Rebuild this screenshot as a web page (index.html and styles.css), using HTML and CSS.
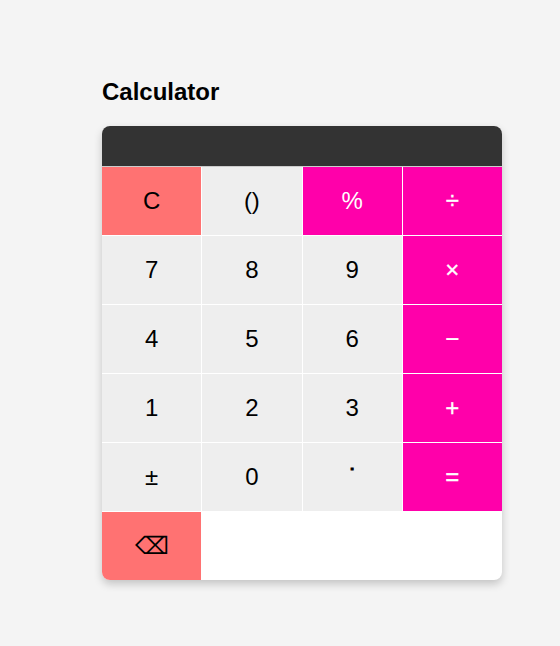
FILE: index.html
```html
<!DOCTYPE html>
<html lang="en">
<head>
<meta charset="utf-8">
<title>Calculator</title>
<link rel="stylesheet" href="styles.css">
</head>
<body>
<main class="container">
<h2>Calculator</h2>
<div class="calculator">
<div class="display"></div>
<div class="buttons">
<button class="clear">C</button><button>()</button><button class="operator percent">%</button><button class="operator">÷</button>
<button>7</button><button>8</button><button>9</button><button class="operator">×</button>
<button>4</button><button>5</button><button>6</button><button class="operator">−</button>
<button>1</button><button>2</button><button>3</button><button class="operator">+</button>
<button>±</button><button>0</button><button class="decimal">˙</button><button class="operator">=</button>
<button class="clear">⌫</button>
</div>
</div>
</main>
</body>
</html>
```
FILE: styles.css
```css
body {
  display: flex;
  justify-content: center;
  align-items: flex-start;
  box-sizing: border-box;
  min-height: 646px;
  margin: 0;
  padding-top: 78px;
  background: #f4f4f4;
  font-family: "Liberation Sans", Arial, sans-serif;
}
.container {
  width: 400px;
  margin-left: 44px;
}
h2 {
  margin: 0 0 20px;
  font-size: 24px;
  line-height: 28px;
}
.calculator {
  width: 400px;
  border-radius: 8px;
  overflow: hidden;
  background: #fff;
  box-shadow: 0 4px 8px rgba(0, 0, 0, 0.2);
}
.display {
  height: 40px;
  background: #333;
  border-bottom: 1px solid #ccc;
}
.buttons {
  display: grid;
  grid-template-columns: repeat(4, 1fr);
  gap: 1px;
}
button {
  height: 68px;
  padding: 20px;
  border: 0;
  background: #eee;
  color: #000;
  font: 24px "Liberation Sans", Arial, sans-serif;
}
.clear { background: #ff7272; }
.operator {
  background: #ff00aa;
  color: #fff;
  -webkit-text-stroke: 0.3px #fff;
}
.percent { -webkit-text-stroke: 0; }
.decimal {
  padding-left: 22px;
  -webkit-text-stroke: 1px #000;
}
```
